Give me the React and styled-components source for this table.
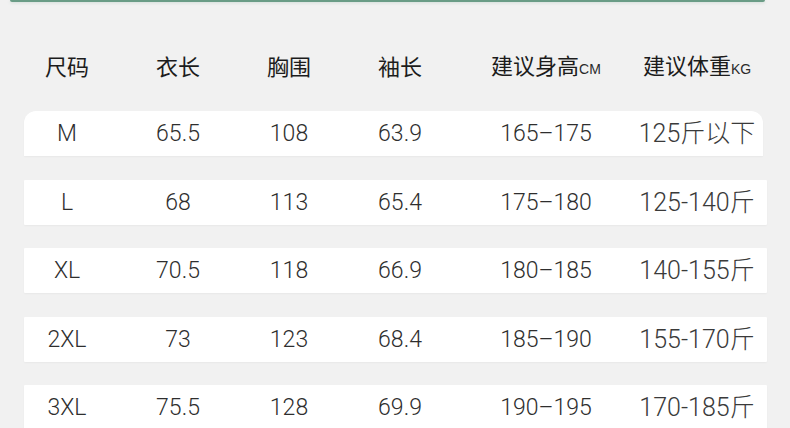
import React from 'react'
import styled, { createGlobalStyle } from 'styled-components'

const GlobalStyle = createGlobalStyle`
  html, body {
    margin: 0;
    padding: 0;
    background: #f1f1f1;
  }
  body {
    width: 790px;
    height: 428px;
    overflow: hidden;
    font-family: "Noto Sans CJK SC", "Noto Sans", sans-serif;
  }
`

const headers = [
  { label: '尺码' },
  { label: '衣长' },
  { label: '胸围' },
  { label: '袖长' },
  { label: '建议身高', unit: 'CM' },
  { label: '建议体重', unit: 'KG' },
]

const sizes = [
  ['M', '65.5', '108', '63.9', '165–175', '125斤以下'],
  ['L', '68', '113', '65.4', '175–180', '125-140斤'],
  ['XL', '70.5', '118', '66.9', '180–185', '140-155斤'],
  ['2XL', '73', '123', '68.4', '185–190', '155-170斤'],
  ['3XL', '75.5', '128', '69.9', '190–195', '170-185斤'],
]

function App() {
  return (
    <Page>
      <GlobalStyle />
      <TopEdge />
      <HeaderRow>
        {headers.map((h) => (
          <HeadCell key={h.label}>
            {h.label}
            {h.unit && <Unit>{h.unit}</Unit>}
          </HeadCell>
        ))}
      </HeaderRow>
      <Rows>
        {sizes.map((row, i) => (
          <Row key={row[0]} $first={i === 0}>
            {row.map((value, j) => (
              <Cell key={j} $weight={j === 5}>
                {value}
              </Cell>
            ))}
          </Row>
        ))}
      </Rows>
    </Page>
  )
}

const Page = styled.div`
  width: 790px;
  height: 428px;
  overflow: hidden;
`
const TopEdge = styled.div`
  height: 2px;
  margin: 0 25px 0 10px;
  background: #6a9c86;
  border-radius: 0 0 4px 4px;
  box-shadow: 0 1px 3px rgba(106, 156, 134, 0.25);
`
const columns = '86px 136px 86px 136px 156px 146px'

const HeaderRow = styled.div`
  display: grid;
  grid-template-columns: ${columns};
  align-items: center;
  height: 93px;
  margin: 16px 24px 0 24px;
`
const HeadCell = styled.div`
  justify-self: center;
  font-size: 22px;
  color: #1c1c1c;
  white-space: nowrap;
  line-height: 1;
`
const Unit = styled.span`
  font-family: "Liberation Sans", Arial, sans-serif;
  font-size: 14px;
  color: #2a2a2a;
`
const Rows = styled.div`
  display: flex;
  flex-direction: column;
  gap: 23.5px;
  margin: 0 23px 0 24px;
`
const Row = styled.div`
  display: grid;
  grid-template-columns: ${columns};
  align-items: center;
  height: 45px;
  background: #ffffff;
  border-radius: ${(p) => (p.$first ? '12px 12px 0 0' : '1px')};
  margin-right: ${(p) => (p.$first ? '4px' : '0')};
  box-shadow: 0 1px 2px rgba(0, 0, 0, 0.04);
`
const Cell = styled.div`
  justify-self: center;
  font-family: Roboto, "Noto Sans CJK SC", sans-serif;
  font-weight: 300;
  font-size: ${(p) => (p.$weight ? '25px' : '23px')};
  color: ${(p) => (p.$weight ? '#3a3a3a' : '#2e2e2e')};
  white-space: nowrap;
  line-height: 1;
`

export default App
